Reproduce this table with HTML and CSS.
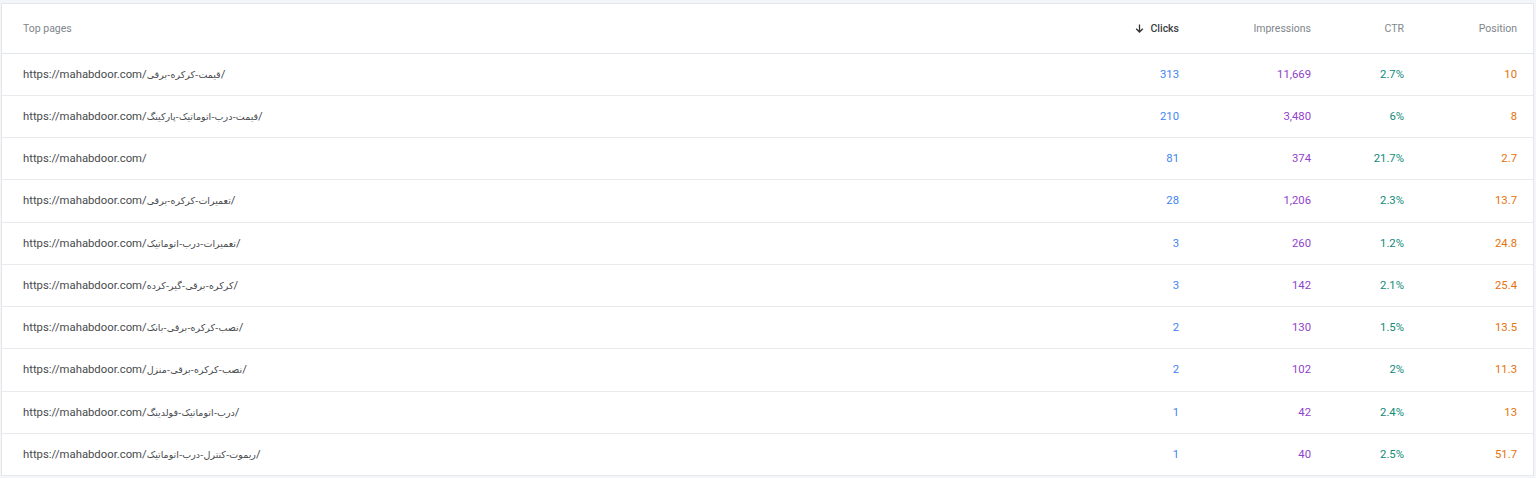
FILE: index.html
```html
<!DOCTYPE html>
<html lang="en">
<head>
<meta charset="utf-8">
<title>Top pages</title>
<link rel="stylesheet" href="styles.css">
</head>
<body>
<div class="card">
  <div class="row head">
    <div class="cell page">Top pages</div>
    <div class="cell num sorted"><svg class="arrow" viewBox="0 0 12 12" width="11" height="11"><path d="M6 1.5v8.2M2.4 6.2L6 9.8l3.6-3.6" fill="none" stroke="#333" stroke-width="1.4"/></svg>Clicks</div>
    <div class="cell num">Impressions</div>
    <div class="cell num">CTR</div>
    <div class="cell num">Position</div>
  </div>
  <div class="row"><div class="cell page">https://mahabdoor.com/<span class="fa">قیمت-کرکره-برقی</span>/</div><div class="cell num clicks">313</div><div class="cell num impr">11,669</div><div class="cell num ctr">2.7%</div><div class="cell num pos">10</div></div>
  <div class="row"><div class="cell page">https://mahabdoor.com/<span class="fa">قیمت-درب-اتوماتیک-پارکینگ</span>/</div><div class="cell num clicks">210</div><div class="cell num impr">3,480</div><div class="cell num ctr">6%</div><div class="cell num pos">8</div></div>
  <div class="row"><div class="cell page">https://mahabdoor.com/</div><div class="cell num clicks">81</div><div class="cell num impr">374</div><div class="cell num ctr">21.7%</div><div class="cell num pos">2.7</div></div>
  <div class="row"><div class="cell page">https://mahabdoor.com/<span class="fa">تعمیرات-کرکره-برقی</span>/</div><div class="cell num clicks">28</div><div class="cell num impr">1,206</div><div class="cell num ctr">2.3%</div><div class="cell num pos">13.7</div></div>
  <div class="row"><div class="cell page">https://mahabdoor.com/<span class="fa">تعمیرات-درب-اتوماتیک</span>/</div><div class="cell num clicks">3</div><div class="cell num impr">260</div><div class="cell num ctr">1.2%</div><div class="cell num pos">24.8</div></div>
  <div class="row"><div class="cell page">https://mahabdoor.com/<span class="fa">کرکره-برقی-گیر-کرده</span>/</div><div class="cell num clicks">3</div><div class="cell num impr">142</div><div class="cell num ctr">2.1%</div><div class="cell num pos">25.4</div></div>
  <div class="row"><div class="cell page">https://mahabdoor.com/<span class="fa">نصب-کرکره-برقی-بانک</span>/</div><div class="cell num clicks">2</div><div class="cell num impr">130</div><div class="cell num ctr">1.5%</div><div class="cell num pos">13.5</div></div>
  <div class="row"><div class="cell page">https://mahabdoor.com/<span class="fa">نصب-کرکره-برقی-منزل</span>/</div><div class="cell num clicks">2</div><div class="cell num impr">102</div><div class="cell num ctr">2%</div><div class="cell num pos">11.3</div></div>
  <div class="row"><div class="cell page">https://mahabdoor.com/<span class="fa">درب-اتوماتیک-فولدینگ</span>/</div><div class="cell num clicks">1</div><div class="cell num impr">42</div><div class="cell num ctr">2.4%</div><div class="cell num pos">13</div></div>
  <div class="row"><div class="cell page">https://mahabdoor.com/<span class="fa">ریموت-کنترل-درب-اتوماتیک</span>/</div><div class="cell num clicks">1</div><div class="cell num impr">40</div><div class="cell num ctr">2.5%</div><div class="cell num pos">51.7</div></div>
</div>
</body>
</html>
```

FILE: styles.css
```css
html, body {
  margin: 0;
  padding: 0;
  background: #f3f5f8;
}
body {
  padding: 3px 2px 0 1px;
  font-family: Roboto, "DejaVu Sans", sans-serif;
  color: #474a4d;
}
.card {
  background: #fff;
  border: 1px solid #e3e6ea;
  border-bottom: none;
}
.row {
  display: grid;
  grid-template-columns: 1fr 160px 132px 93px 113px;
  padding: 0 16px 0 21px;
  height: 41.25px;
  align-items: center;
  border-bottom: 1px solid #e8eaed;
  font-size: 11.3px;
}
.row.head {
  height: 48.5px;
  font-size: 10.5px;
  color: #80868b;
  border-bottom: 1px solid #e3e6ea;
}
.fa {
  font-family: "DejaVu Sans", sans-serif;
  font-size: 9.5px;
  letter-spacing: -0.2px;
}
.cell.num {
  text-align: right;
}
.sorted {
  color: #3c4043;
  font-weight: 500;
  display: flex;
  justify-content: flex-end;
  align-items: center;
  gap: 5px;
}
.arrow {
  display: block;
}
.clicks { color: #4285f4; }
.impr { color: #9142cc; }
.ctr { color: #0f8a78; }
.pos { color: #e8710a; }
```
